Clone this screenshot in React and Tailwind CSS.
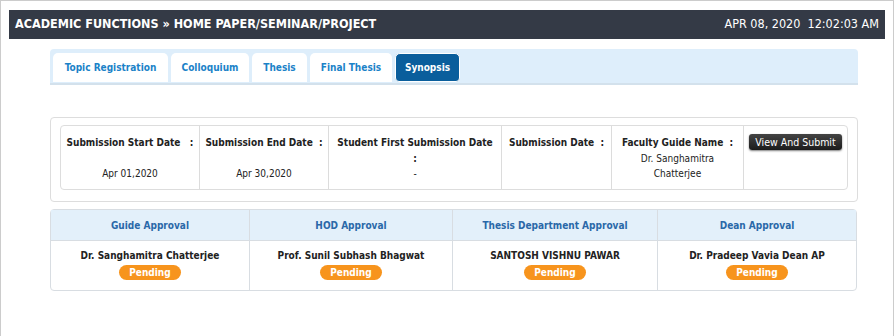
const font = { fontFamily: '"DejaVu Sans Condensed", "DejaVu Sans", Verdana, sans-serif' };

const tabs = [
  { label: 'Topic Registration', w: 'w-[115px]' },
  { label: 'Colloquium', w: 'w-[78px]' },
  { label: 'Thesis', w: 'w-[55px]' },
  { label: 'Final Thesis', w: 'w-[82px]' },
  { label: 'Synopsis', w: 'w-[65px]', active: true },
];

const approvals = [
  { title: 'Guide Approval', name: 'Dr. Sanghamitra Chatterjee', w: 'w-[199px]' },
  { title: 'HOD Approval', name: 'Prof. Sunil Subhash Bhagwat', w: 'w-[203px]' },
  { title: 'Thesis Department Approval', name: 'SANTOSH VISHNU PAWAR', w: 'w-[205px]' },
  { title: 'Dean Approval', name: 'Dr. Pradeep Vavia Dean AP', w: 'flex-1' },
];

function Cell({ w, last, children }) {
  return (
    <div className={`${w} ${last ? '' : 'border-r border-[#dcdcdc]'} pt-[9px] text-center leading-[15.5px]`}>
      {children}
    </div>
  );
}

export default function App() {
  return (
    <div style={font} className="w-[894px] h-[336px] border-l border-t border-r border-[#cccccc] bg-white text-[10px] text-[#222]">
      <div className="mx-[8px] mt-[9px] h-[29px] bg-[#343a46] flex items-center justify-between px-[6px] text-white">
        <span className="font-bold text-[12.5px]">ACADEMIC FUNCTIONS » HOME PAPER/SEMINAR/PROJECT</span>
        <span className="text-[12.5px] whitespace-pre">APR 08, 2020  12:02:03 AM</span>
      </div>

      <div className="ml-[49px] w-[808px] mt-[10px] h-[36px] bg-[#deeefb] rounded-t-[4px] border-b-2 border-[#d3e1ec] flex items-end gap-[3px] pl-[3px] pb-[1px]">
        {tabs.map(t => (
          <div
            key={t.label}
            className={`${t.w} h-[29px] rounded-t-[5px] flex items-center justify-center font-bold ${
              t.active ? 'bg-[#0a5e9c] text-white border border-white rounded-[4px]' : 'bg-white text-[#1b82c8]'
            }`}
          >
            {t.label}
          </div>
        ))}
      </div>

      <div className="ml-[49px] w-[808px] mt-[32px] h-[85px] border border-[#dddddd] rounded-[4px] pt-[7px] pl-[9px]">
        <div className="w-[788px] h-[65px] border border-[#dddddd] rounded-[4px] flex">
          <Cell w="w-[139px]">
            <div className="font-bold whitespace-pre">Submission Start Date   :</div>
            <div>&nbsp;</div>
            <div>Apr 01,2020</div>
          </Cell>
          <Cell w="w-[129px]">
            <div className="font-bold whitespace-pre">Submission End Date  :</div>
            <div>&nbsp;</div>
            <div>Apr 30,2020</div>
          </Cell>
          <Cell w="w-[173px]">
            <div className="font-bold">Student First Submission Date</div>
            <div className="font-bold">:</div>
            <div>-</div>
          </Cell>
          <Cell w="w-[110px]">
            <div className="font-bold whitespace-pre">Submission Date  :</div>
          </Cell>
          <Cell w="w-[132px]">
            <div className="font-bold whitespace-pre">Faculty Guide Name  :</div>
            <div>Dr. Sanghamitra</div>
            <div>Chatterjee</div>
          </Cell>
          <div className="flex-1 pt-[8px] flex justify-center">
            <button className="h-[16px] px-[6px] rounded-[3px] bg-gradient-to-b from-[#444] to-[#1c1c1c] text-white text-[10.5px] leading-[16px] shadow-[0_1px_2px_rgba(0,0,0,0.5)]">
              View And Submit
            </button>
          </div>
        </div>
      </div>

      <div className="ml-[49px] w-[807px] mt-[7px] border border-[#d8dde2] rounded-[4px] flex">
        {approvals.map((a, i) => (
          <div key={a.title} className={`${a.w} ${i < 3 ? 'border-r border-[#d8dde2]' : ''} flex flex-col`}>
            <div className="h-[31px] bg-[#e3f0fa] border-b border-[#d8dde2] flex items-center justify-center font-bold text-[#2a68a8]">
              {a.title}
            </div>
            <div className="h-[49px] flex flex-col items-center pt-[8px]">
              <div className="font-bold leading-[14px]">{a.name}</div>
              <div className="mt-[2px] h-[15px] px-[10px] rounded-full bg-[#f7941d] text-white font-bold leading-[15px]">Pending</div>
            </div>
          </div>
        ))}
      </div>
    </div>
  );
}
